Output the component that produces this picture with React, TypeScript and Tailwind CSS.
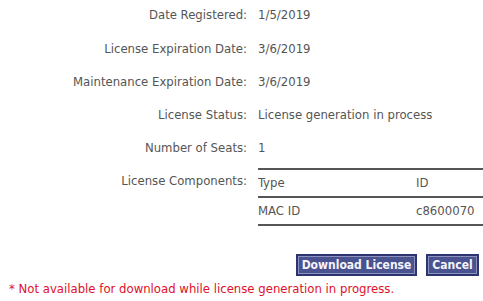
export default function App() {
  const rows: [string, string][] = [
    ["Date Registered:", "1/5/2019"],
    ["License Expiration Date:", "3/6/2019"],
    ["Maintenance Expiration Date:", "3/6/2019"],
    ["License Status:", "License generation in process"],
    ["Number of Seats:", "1"],
  ];
  const btn =
    "h-[22px] bg-[#4a5290] text-[#f4f4fa] text-[12px] font-bold border-2 border-[#2e356e] outline outline-1 -outline-offset-3 outline-[#8c92c0] leading-none";
  return (
    <div
      className="w-[483px] h-[301px] overflow-hidden bg-white text-[13px] text-[#555]"
      style={{ fontFamily: '"DejaVu Sans Condensed", "DejaVu Sans", sans-serif' }}
    >
      <div className="grid grid-cols-[247px_1fr] gap-x-[11px]">
        {rows.map(([l, v], i) => [
          <div key={l + "l"} className={`h-[33px] text-right ${i === 0 ? "pt-[5px]" : "pt-[6px]"}`}>{l}</div>,
          <div key={l + "v"} className={`h-[33px] whitespace-nowrap ${i === 0 ? "pt-[5px]" : "pt-[6px]"}`}>{v}</div>,
        ])}
        <div className="pt-[6px] text-right">License Components:</div>
        <div className="overflow-hidden">
          <div className="w-[300px] mt-[3px] border-t-2 border-[#555]">
            <div className="flex h-[28px] items-center border-b-2 border-[#555]">
              <div className="w-[158px]">Type</div>
              <div>ID</div>
            </div>
            <div className="flex h-[28px] items-center border-b-2 border-[#555]">
              <div className="w-[158px]">MAC ID</div>
              <div>c8600070</div>
            </div>
          </div>
        </div>
      </div>
      <div className="flex justify-end gap-[9px] pr-[4px] mt-[28px]">
        <button className={`${btn} w-[121px]`}>Download License</button>
        <button className={`${btn} w-[53px]`}>Cancel</button>
      </div>
      <div className="pl-[9px] mt-[3px] text-[#e0102a]">
        * Not available for download while license generation in progress.
      </div>
    </div>
  );
}
